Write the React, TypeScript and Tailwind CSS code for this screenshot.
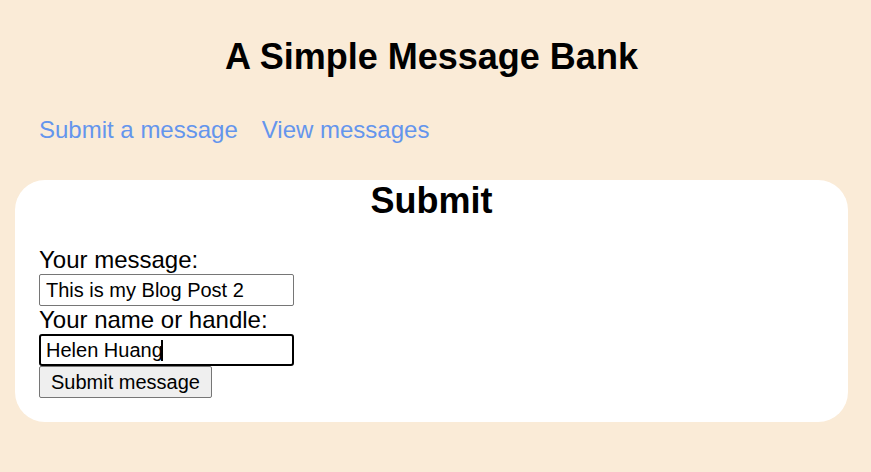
import { useState } from "react";

const font = { fontFamily: '"Liberation Sans", Arial, sans-serif' };

const MessageForm = () => {
    const [message, setMessage] = useState("This is my Blog Post 2");
    const [handle, setHandle] = useState("Helen Huang");

    return (
        <div className="bg-white rounded-[30px] px-6 pb-6">
            <h2 className="text-[36px] leading-[41px] font-bold text-center text-black mb-[25px]">Submit</h2>
            <form className="flex flex-col items-start" onSubmit={(e) => e.preventDefault()}>
                <label className="text-[24px] leading-[28px] text-black">Your message:</label>
                <input
                    value={message}
                    onChange={(e) => setMessage(e.target.value)}
                    className="w-[255px] h-[32px] text-[20px] px-[6px] border border-[#767676] rounded-[2px] bg-white text-black outline-none caret-transparent"
                />
                <label className="text-[24px] leading-[28px] text-black">Your name or handle:</label>
                <div className="relative">
                    <input
                        value={handle}
                        onChange={(e) => setHandle(e.target.value)}
                        className="w-[255px] h-[32px] text-[20px] px-[5px] border-2 border-black rounded-[3px] bg-white text-black outline-none caret-transparent"
                    />
                    {/* caret */}
                    <span className="absolute left-[122px] top-[6px] w-[2px] h-[21px] bg-black"></span>
                </div>
                <button
                    type="submit"
                    className="h-[32px] px-[11px] text-[20px] leading-none text-black bg-[#efefef] border border-[#767676] rounded-[2px]"
                >
                    Submit message
                </button>
            </form>
        </div>
    );
};

const App = () => {
    return (
        <div className="min-h-[472px] w-full bg-[#faebd7] pt-[36px] pb-[50px]" style={font}>
            <div className="ml-[15px] w-[833px]">
                <h1 className="text-[36px] leading-[41px] font-bold text-center text-black">A Simple Message Bank</h1>
                <nav className="flex flex-row gap-6 pl-6 mt-[39px] mb-[36px] text-[24px] leading-[28px]">
                    <a href="#" className="text-[#6495ed]">Submit a message</a>
                    <a href="#" className="text-[#6495ed]">View messages</a>
                </nav>
                <MessageForm />
            </div>
        </div>
    );
};

export default App;
